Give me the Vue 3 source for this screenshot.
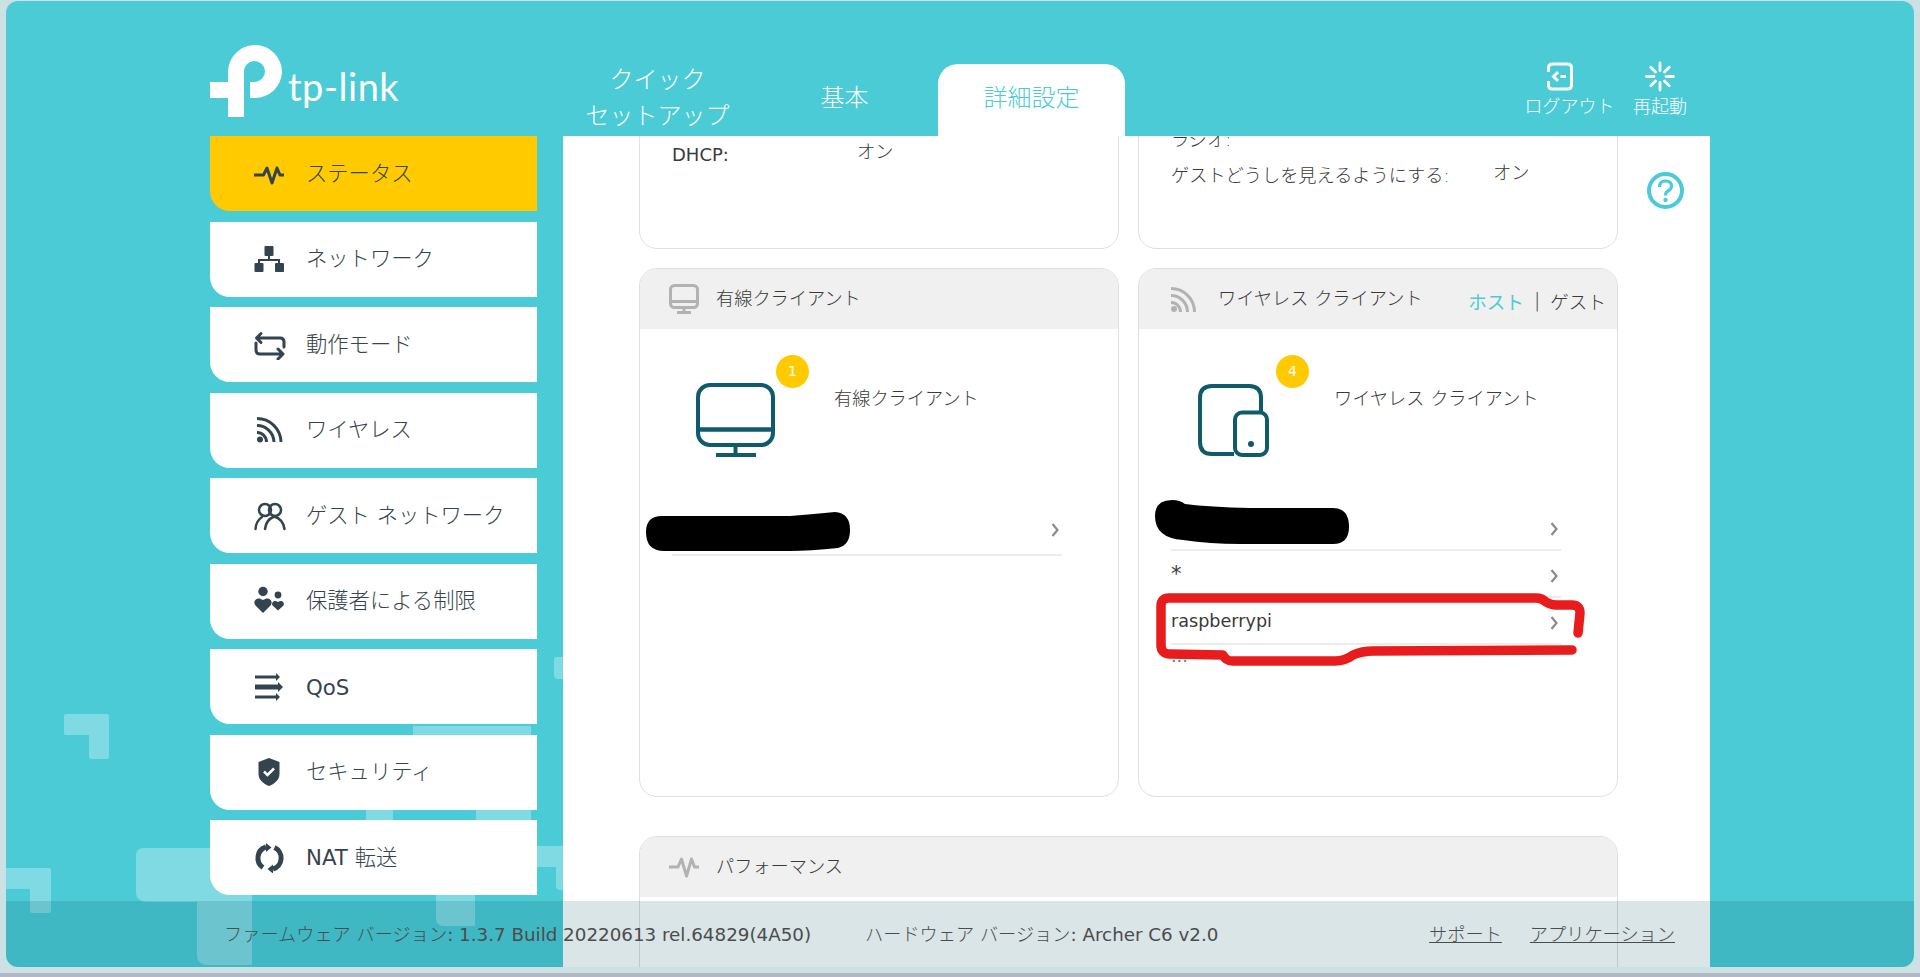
<script setup>
const wiredRows = [{ id: 'w1', text: '' }]
const wirelessRows = [
  { id: 'a', text: '' },
  { id: 'b', text: '*' },
  { id: 'c', text: 'raspberrypi' }
]
</script>

<template>
  <div class="page">
    <div class="frame">
      <svg class="pattern" viewBox="6 1 1908 966" width="1908" height="966" aria-hidden="true">
        <g fill="#7fdae3">
          <path d="M66 714H107Q109 714 109 716V757Q109 759 107 759H91Q89 759 89 757V735H66Q64 735 64 733V716Q64 714 66 714Z" />
          <path d="M6 868H49Q51 868 51 870V911Q51 913 49 913H33Q30 913 30 911V889H6Z" />
          <path d="M144 848H252V965H208Q197 965 197 955V902H148Q136 902 136 892V856Q136 848 144 848Z" />
          <path d="M413 726H531V735H413Z" />
          <path d="M366 810H393V820H366ZM476 810H531V820H476Z" />
          <path d="M556 657H563V679H558Q554 679 554 675V661Q554 657 556 657Z" />
          <path d="M537 846H563V890H560Q556 890 556 886V867H537Z" />
          <path d="M436 895H475V926H444Q436 926 436 918Z" />
        </g>
      </svg>

      <header class="top">
        <div class="logo">
          <svg class="logo-mark" viewBox="0 0 73 72" width="73" height="72" aria-hidden="true">
            <path fill="#fff" d="M18 27A27 27 0 0 1 72 27A27 27 0 0 1 45 53H40V37H45A10.500 10.500 0 1 0 34 27V72H18V53H0V37H18Z" />
          </svg>
          <span class="logo-word">tp-link</span>
        </div>
        <nav class="tabs">
          <div class="tab"><span>クイック<br />セットアップ</span></div>
          <div class="tab"><span>基本</span></div>
          <div class="tab tab-active"><span>詳細設定</span></div>
        </nav>
        <div class="actions">
          <div class="action action-out">
            <svg viewBox="0 0 26 28" width="26" height="28" fill="none" stroke="#fff" stroke-width="3" aria-hidden="true">
              <path d="M1.500 9.500V5.500Q1.500 1.500 5.500 1.500H20.500Q24.500 1.500 24.500 5.500V22.500Q24.500 26.500 20.500 26.500H5.500Q1.500 26.500 1.500 22.500V18.500" />
              <path d="M11 9.500L6.500 14L11 18.500M13.500 14H19" />
            </svg>
            <span>ログアウト</span>
          </div>
          <div class="action">
            <svg viewBox="0 0 30 30" width="30" height="30" fill="none" stroke="#fff" stroke-width="2.800" stroke-linecap="round" aria-hidden="true">
              <path d="M15 1.500V9M15 21V28.500M1.500 15H9M21 15H28.500M5.800 5.800L10.500 10.500M19.500 19.500L24.200 24.200M24.200 5.800L19.500 10.500M10.500 19.500L5.800 24.200" />
            </svg>
            <span>再起動</span>
          </div>
        </div>
      </header>

      <div class="main">
        <aside class="menu">
          <div class="item item-on">
            <svg viewBox="0 0 32 30" width="32" height="30" fill="none" stroke="#34444f" stroke-width="3" stroke-linejoin="round" aria-hidden="true">
              <path d="M0 16H9.500L13 9L18 24L23 9L26 16H30" />
            </svg>
            <span>ステータス</span>
          </div>
          <div class="item">
            <svg viewBox="0 0 32 30" width="32" height="30" fill="#34444f" aria-hidden="true">
              <rect x="10.500" y="2" width="9" height="10" rx="1" />
              <path d="M14 12H16V15H26V19H24V17H6V19H4V15H14Z" />
              <rect x="0.500" y="19" width="9" height="9" rx="1" />
              <rect x="21" y="19" width="9" height="9" rx="1" />
            </svg>
            <span>ネットワーク</span>
          </div>
          <div class="item">
            <svg viewBox="0 0 32 30" width="32" height="30" fill="none" stroke="#34444f" stroke-width="3" stroke-linecap="round" stroke-linejoin="round" aria-hidden="true">
              <path d="M3 8H26Q30 8 30 12V17M7 3.500L2.500 8L7 12.500" />
              <path d="M2 13V20Q2 24 6 24H28M24 19L29 24L24 29" />
            </svg>
            <span>動作モード</span>
          </div>
          <div class="item">
            <svg viewBox="0 0 32 30" width="32" height="30" fill="none" stroke="#34444f" stroke-width="3" aria-hidden="true">
              <path d="M3 3.500A24 24 0 0 1 27 27M3 10.500A17 17 0 0 1 20 27M3 17.500A9.500 9.500 0 0 1 12.500 27" />
              <circle cx="6" cy="24.500" r="3" fill="#34444f" stroke="none" />
            </svg>
            <span>ワイヤレス</span>
          </div>
          <div class="item">
            <svg viewBox="0 0 32 30" width="32" height="30" fill="none" stroke="#34444f" stroke-width="2.500" stroke-linecap="round" aria-hidden="true">
              <circle cx="11" cy="9" r="6" />
              <circle cx="21" cy="9" r="6" />
              <path d="M1.500 28Q2 20 8 16M11 28Q12 19 20 15.500Q29 18 30.500 28" />
            </svg>
            <span>ゲスト ネットワーク</span>
          </div>
          <div class="item">
            <svg viewBox="0 0 32 30" width="32" height="30" fill="#34444f" aria-hidden="true">
              <circle cx="9" cy="5.500" r="4.700" />
              <path d="M9 27L1.500 19.500C-2 15.500 3 9.500 9 14C15 9.500 20 15.500 16.500 19.500Z" />
              <circle cx="24" cy="9" r="3.400" />
              <path d="M24 24.500L18.800 19.800C16.500 17 20 13 24 16C28 13 31.500 17 29.200 19.800Z" />
            </svg>
            <span>保護者による制限</span>
          </div>
          <div class="item">
            <svg viewBox="0 0 32 30" width="32" height="30" fill="#34444f" aria-hidden="true">
              <path d="M1 3.500H22V1L26 5L22 9V6.500H1Z" />
              <path d="M1 12.500H24V10L29 15L24 20V17.500H1Z" />
              <path d="M1 23.500H22V21L26 25L22 29V26.500H1Z" />
            </svg>
            <span class="lat lat-menu">QoS</span>
          </div>
          <div class="item">
            <svg viewBox="0 0 32 30" width="32" height="30" aria-hidden="true">
              <path fill="#34444f" d="M15 1L25.500 5V17C25.500 23 20 27 15 29C10 27 4.500 23 4.500 17V5Z" />
              <path fill="none" stroke="#fff" stroke-width="2.500" d="M10 14.500L13.500 18L20 11.500" />
            </svg>
            <span>セキュリティ</span>
          </div>
          <div class="item">
            <svg viewBox="0 0 32 30" width="32" height="30" fill="none" stroke="#34444f" stroke-width="5" aria-hidden="true">
              <path d="M9 24.500A11.500 11.500 0 0 1 12 4" />
              <path d="M20.500 4.600A11.500 11.500 0 0 1 19 26" />
              <path fill="#34444f" stroke="none" d="M12 0L17.500 4.500L12 9ZM19 21.500L13.500 26L19 30.500Z" />
            </svg>
            <span><span class="lat">NAT</span> 転送</span>
          </div>
        </aside>

        <section class="panel">
          <div class="content">
            <div class="cards">
              <div class="card card-top">
                <div class="info info-one">
                  <div class="pair"><span class="key key-short lat">DHCP:</span><span class="val">オン</span></div>
                </div>
              </div>
              <div class="card card-top">
                <div class="info info-two">
                  <div class="pair"><span class="key">ラジオ:</span></div>
                  <div class="pair"><span class="key key-long">ゲストどうしを見えるようにする:</span><span class="val">オン</span></div>
                </div>
              </div>

              <div class="card card-client">
                <div class="card-head">
                  <svg class="head-icon" viewBox="0 0 30 30" width="30" height="30" fill="none" stroke="#b2b2b2" stroke-width="3" aria-hidden="true">
                    <rect x="1.500" y="1.500" width="27" height="22" rx="4" />
                    <path d="M1.500 17.500H28.500M15 24V28M8 28.500H22" />
                  </svg>
                  <span class="head-title">有線クライアント</span>
                </div>
                <div class="summary summary-wired">
                  <div class="art">
                    <svg viewBox="0 0 79 74" width="79" height="74" fill="none" stroke="#0f5a6b" stroke-width="4" aria-hidden="true">
                      <rect x="2" y="2" width="75" height="60" rx="12" />
                      <path d="M2 46.500H77" stroke-width="4.500" />
                      <path d="M39.500 62V71M20 72H60" stroke-width="4" />
                    </svg>
                    <span class="badge">1</span>
                  </div>
                  <span class="art-label">有線クライアント</span>
                </div>
                <div class="rows rows-wired">
                  <div v-for="row in wiredRows" :key="row.id" class="row">
                    <span class="lat">{{ row.text }}</span>
                    <svg class="chev" viewBox="0 0 8 14" width="8" height="14" fill="none" stroke="#8b8b8b" stroke-width="2.200" aria-hidden="true"><path d="M1.500 1L6.500 7L1.500 13" /></svg>
                  </div>
                </div>
              </div>

              <div class="card card-client">
                <div class="card-head card-head-wifi">
                  <svg class="head-icon-wifi" viewBox="0 0 25 25" width="25" height="25" fill="none" stroke="#b2b2b2" stroke-width="3" aria-hidden="true">
                    <path d="M0 1.500A23.500 23.500 0 0 1 23.500 25M0 8.500A16.500 16.500 0 0 1 16.500 25M0 15.500A9.500 9.500 0 0 1 9.500 25" />
                    <circle cx="3" cy="22" r="3" fill="#b2b2b2" stroke="none" />
                  </svg>
                  <span class="head-title">ワイヤレス クライアント</span>
                  <div class="switch">
                    <span class="link-on">ホスト</span>
                    <span class="sep">|</span>
                    <span>ゲスト</span>
                  </div>
                </div>
                <div class="summary summary-wifi">
                  <div class="art art-wifi">
                    <svg viewBox="0 0 71 74" width="71" height="74" fill="none" stroke="#0f5a6b" stroke-width="4" aria-hidden="true">
                      <path d="M36 71H14Q2 71 2 59V15Q2 3 14 3H51Q63 3 63 15V29" />
                      <rect x="37" y="29.500" width="32" height="42.500" rx="7" />
                      <circle cx="53" cy="61" r="3" fill="#0f5a6b" stroke="none" />
                    </svg>
                    <span class="badge badge-wifi">4</span>
                  </div>
                  <span class="art-label">ワイヤレス クライアント</span>
                </div>
                <div class="rows rows-wifi">
                  <div v-for="row in wirelessRows" :key="row.id" class="row">
                    <span class="lat" :class="{ star: row.text === '*' }">{{ row.text }}</span>
                    <svg class="chev" viewBox="0 0 8 14" width="8" height="14" fill="none" stroke="#8b8b8b" stroke-width="2.200" aria-hidden="true"><path d="M1.500 1L6.500 7L1.500 13" /></svg>
                  </div>
                  <div class="row row-last"><span class="dots lat">...</span></div>
                </div>
              </div>

              <div class="card card-perf">
                <div class="card-head">
                  <svg class="head-icon" viewBox="0 0 30 30" width="30" height="30" fill="none" stroke="#b2b2b2" stroke-width="3" stroke-linejoin="round" aria-hidden="true">
                    <path d="M0 15H9L12.500 7L17.500 24L22.500 7L25.500 15H30" />
                  </svg>
                  <span class="head-title">パフォーマンス</span>
                </div>
              </div>
            </div>
          </div>
          <svg class="help" viewBox="0 0 37 37" width="37" height="37" fill="none" stroke="#4acbd6" stroke-width="4" aria-hidden="true">
            <circle cx="18.500" cy="18.500" r="16.500" />
            <path d="M12.500 15Q12.500 9 18.500 9Q24.500 9 24.500 14Q24.500 17 21 19Q18.500 20.500 18.500 23.500" stroke-width="3.200" />
            <circle cx="18.500" cy="28" r="2.200" fill="#4acbd6" stroke="none" />
          </svg>
        </section>
      </div>

      <svg class="marks" viewBox="6 1 1908 966" width="1908" height="966" aria-hidden="true">
        <path fill="#000" d="M662 516H790Q815 514 835 512Q850 513 850 530Q850 545 838 548Q810 551 790 551H664Q646 551 646 532Q646 516 662 516Z" />
        <path fill="#000" d="M1172 500Q1180 500 1185 504Q1210 507 1250 508H1333Q1349 508 1349 527Q1349 544 1333 544H1240Q1210 544 1183 540Q1155 538 1155 516Q1155 500 1172 500Z" />
        <path fill="none" stroke="#e81c1c" stroke-width="9.500" stroke-linecap="round" stroke-linejoin="round" d="M1572 650L1373 651Q1362 651 1353 655Q1345 661 1335 661H1232Q1226 661 1223 655L1170 654Q1161 654 1161 645V606Q1161 598 1169 598H1536Q1542 598 1546 602Q1551 605 1556 605H1572Q1580 605 1580 613L1578 633" />
      </svg>

      <footer class="foot">
        <span class="fw">ファームウェア バージョン<span class="lat">: 1.3.7 Build 20220613 rel.64829(4A50)</span></span>
        <span class="hw">ハードウェア バージョン<span class="lat">: Archer C6 v2.0</span></span>
        <a class="foot-link foot-support">サポート</a>
        <a class="foot-link">アプリケーション</a>
      </footer>
    </div>
    <div class="strip"></div>
  </div>
</template>

<style scoped>
.page {
  width: 1920px;
  height: 977px;
  overflow: hidden;
  background: #cbe1e4;
  font-family: "DejaVu Sans", "Noto Sans CJK JP", sans-serif;
  font-weight: 300;
  color: #3a3a3a;
  display: flex;
  flex-direction: column;
}
.lat {
  font-weight: 400;
}
.frame {
  position: relative;
  width: 1908px;
  height: 966px;
  margin: 1px 0 0 6px;
  background: #4acbd6;
  border-radius: 12px;
  overflow: hidden;
  flex: none;
}
.strip {
  height: 4px;
  margin-top: 6px;
  background: #b3b8c4;
  flex: none;
}
.pattern {
  position: absolute;
  left: 0;
  top: 0;
}
.marks {
  position: absolute;
  left: 0;
  top: 0;
  pointer-events: none;
}

.top {
  position: relative;
  display: flex;
  height: 135px;
  padding-left: 204px;
}
.logo {
  width: 354px;
  flex: none;
  display: flex;
  align-items: flex-start;
  padding-top: 44px;
  box-sizing: border-box;
  color: #fff;
}
.logo-mark {
  flex: none;
}
.logo-word {
  margin: 18px 0 0 5px;
  font-family: Lato, "Open Sans", sans-serif;
  font-size: 38px;
  font-weight: 400;
  line-height: 46px;
  letter-spacing: 0.5px;
}
.tabs {
  display: flex;
  align-items: flex-end;
}
.tab {
  width: 187px;
  height: 72px;
  padding-bottom: 4px;
  box-sizing: border-box;
  display: flex;
  align-items: center;
  justify-content: center;
  text-align: center;
  color: #fff;
  font-size: 24px;
  line-height: 36px;
  white-space: nowrap;
}
.tab-active {
  background: #fff;
  color: #4acbd6;
  border-radius: 20px 20px 0 0;
}
.actions {
  display: flex;
  gap: 18.500px;
  margin-left: auto;
  padding: 60px 227px 0 0;
  color: #fff;
  font-size: 18px;
  line-height: 24px;
}
.action {
  display: flex;
  flex-direction: column;
  align-items: center;
}
.action svg {
  height: 31px;
  margin-bottom: 3px;
}
.action-out svg {
  margin-right: 19px;
}

.main {
  position: relative;
  display: flex;
  height: 831px;
  padding-left: 204px;
  gap: 26px;
}
.menu {
  width: 327px;
  flex: none;
  display: flex;
  flex-direction: column;
  gap: 10.500px;
}
.item {
  height: 75px;
  flex: none;
  display: flex;
  align-items: center;
  gap: 20px;
  padding-left: 44px;
  background: #fff;
  border-radius: 0 0 0 20px;
  color: #36444c;
  font-size: 21.300px;
}
.item > span {
  margin-top: -5px;
}
.item > .lat-menu {
  margin-top: 2px;
}
.item-on {
  background: #ffcb00;
}

.panel {
  width: 1147px;
  flex: none;
  background: #fff;
  display: flex;
  overflow: hidden;
}
.content {
  width: 979px;
  margin-left: 76px;
  flex: none;
}
.cards {
  margin-top: -60px;
  display: grid;
  grid-template-columns: 480px 480px;
  column-gap: 19px;
  row-gap: 19px;
}
.card {
  border: 1px solid #dfdfdf;
  border-radius: 18px;
  box-sizing: border-box;
  background: #fff;
}
.card-top {
  height: 173px;
}
.card-client {
  height: 529px;
}
.card-perf {
  grid-column: 1 / span 2;
  margin-top: 20px;
  height: 200px;
  overflow: hidden;
}
.info {
  font-size: 18.200px;
  line-height: 24px;
  padding-left: 32px;
}
.info-one {
  padding-top: 66px;
}
.info-two {
  padding-top: 51px;
  display: flex;
  flex-direction: column;
  gap: 12px;
}
.pair {
  display: flex;
}
.key-short {
  width: 185px;
  font-size: 18px;
}
.key-long {
  width: 322px;
}
.val {
  line-height: 18px;
}
.card-head {
  height: 60px;
  background: #f0f0f0;
  border-radius: 17px 17px 0 0;
  display: flex;
  align-items: center;
  padding-left: 29px;
  gap: 17px;
  font-size: 18.200px;
}
.card-head-wifi {
  padding-left: 32px;
  gap: 22px;
}
.head-title {
  margin-top: -5px;
}
.head-icon,
.head-icon-wifi {
  flex: none;
}
.switch {
  margin-left: auto;
  margin-top: 3px;
  padding-right: 11px;
  display: flex;
  gap: 10px;
  font-size: 18.600px;
}
.link-on {
  color: #4acbd6;
  font-weight: 400;
}
.sep {
  margin-top: 3px;
}
.summary {
  display: flex;
  align-items: flex-start;
  padding-top: 54px;
  font-size: 18.200px;
  box-sizing: border-box;
}
.summary-wired {
  height: 180px;
  padding-left: 56px;
}
.summary-wifi {
  height: 175px;
  padding-left: 59px;
}
.art {
  position: relative;
  width: 138px;
  flex: none;
}
.art-wifi {
  width: 136px;
}
.art svg {
  display: block;
}
.art-label {
  margin-top: 4px;
  line-height: 24px;
}
.badge {
  position: absolute;
  left: 80px;
  top: -28px;
  width: 33px;
  height: 33px;
  border-radius: 50%;
  background: #ffcb00;
  color: #fff;
  font-size: 14px;
  font-weight: 400;
  line-height: 33px;
  text-align: center;
}
.badge-wifi {
  left: 78px;
}
.rows {
  padding: 0 56px 0 32px;
  font-size: 17.600px;
}
.row {
  height: 47px;
  box-sizing: border-box;
  border-bottom: 2px solid #ececec;
  display: flex;
  align-items: center;
  justify-content: space-between;
  padding-right: 3px;
}
.star {
  font-size: 21px;
  line-height: 24px;
}
.rows-wired .chev {
  margin-top: -4px;
}
.rows-wifi .chev {
  margin-top: 4px;
}
.row-last {
  border-bottom: 0;
  justify-content: flex-start;
}
.row > .dots {
  margin-top: -26px;
  line-height: 24px;
  color: #777;
}
.chev {
  flex: none;
}
.help {
  margin: 36px 0 0 29px;
  flex: none;
}

.foot {
  position: absolute;
  left: 0;
  right: 0;
  bottom: 0;
  height: 66px;
  background: rgba(0, 80, 90, 0.15);
  display: flex;
  align-items: center;
  padding-left: 218px;
  color: #4c4c4c;
  font-size: 18.200px;
}
.foot .lat {
  font-size: 18.300px;
}
.foot > span,
.foot > a {
  margin-top: -2px;
}
.fw {
  width: 641px;
  flex: none;
}
.hw {
  flex: none;
}
.foot-link {
  text-decoration: underline;
  margin-left: 28px;
  flex: none;
}
.foot-support {
  margin-left: auto;
}
.foot-link:last-child {
  margin-right: 239px;
}
</style>

<style>
html,
body {
  margin: 0;
  background: #cbe1e4;
}
</style>
